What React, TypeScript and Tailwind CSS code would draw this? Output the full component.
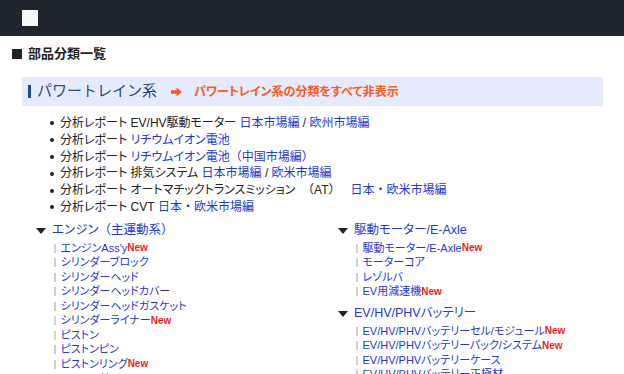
import React from 'react';

const font = { fontFamily: '"Liberation Sans", "Noto Sans CJK JP", sans-serif' };

type Item = { label: string; isNew?: boolean };

const engine: Item[] = [
  { label: "エンジンAss'y", isNew: true },
  { label: 'シリンダーブロック' },
  { label: 'シリンダーヘッド' },
  { label: 'シリンダーヘッドカバー' },
  { label: 'シリンダーヘッドガスケット' },
  { label: 'シリンダーライナー', isNew: true },
  { label: 'ピストン' },
  { label: 'ピストンピン' },
  { label: 'ピストンリング', isNew: true },
  { label: 'コンロッド' },
];

const motor: Item[] = [
  { label: '駆動モーター/E-Axle', isNew: true },
  { label: 'モーターコア' },
  { label: 'レゾルバ' },
  { label: 'EV用減速機', isNew: true },
];

const battery: Item[] = [
  { label: 'EV/HV/PHVバッテリーセル/モジュール', isNew: true },
  { label: 'EV/HV/PHVバッテリーパック/システム', isNew: true },
  { label: 'EV/HV/PHVバッテリーケース' },
  { label: 'EV/HV/PHVバッテリー正極材' },
];

// full-width punctuation keeps its normal width (palt off)
const N: React.FC<{ children: React.ReactNode }> = ({ children }) => (
  <span className="[font-feature-settings:normal]">{children}</span>
);

const Link: React.FC<{ children: React.ReactNode }> = ({ children }) => (
  <a href="#" className="text-[#2437d6] no-underline">{children}</a>
);

const Group: React.FC<{ title: React.ReactNode; items: Item[] }> = ({ title, items }) => (
  <div>
    <div className="flex items-center h-[20px]">
      <svg width="10" height="6" viewBox="0 0 10 6" className="mr-[6px]">
        <path d="M0 0h10L5 6z" fill="#222" />
      </svg>
      <span className="text-[12.5px] text-[#2437d6]">{title}</span>
    </div>
    <ul className="pl-[18px]">
      {items.map((it) => (
        <li key={it.label} className="flex items-center h-[14.5px] text-[11px] leading-none">
          <span className="w-[1.5px] h-[9px] bg-[#d0d0d0] mr-[5px]"></span>
          <Link>{it.label}</Link>
          {it.isNew && <span className="text-[10px] font-bold text-[#f01c1c]">New</span>}
        </li>
      ))}
    </ul>
  </div>
);

const Dot = () => <span className="w-[4px] h-[4px] rounded-full bg-[#222] mr-[6px]"></span>;

const App: React.FC = () => {
  return (
    <div className="w-[624px] h-[374px] overflow-hidden bg-white text-[#222] [font-feature-settings:'palt']" style={font}>
      {/* Header bar */}
      <div className="h-9 bg-[#1f252e] flex items-center pl-[22px]">
        <div className="w-4 h-4 bg-[#f6f6f7]"></div>
      </div>

      <div className="pl-3 pr-[21px]">
        <div className="flex items-center h-[18px] mt-[9px]">
          <span className="w-[10px] h-[10px] bg-[#222] mr-[6px]"></span>
          <h1 className="text-[13px] font-bold [font-feature-settings:normal]">部品分類一覧</h1>
        </div>

        <div className="ml-[10px] mt-[14px]">
          {/* Section band */}
          <div className="h-[29px] bg-[#e5eafc] flex items-center pl-[6px]">
            <span className="w-[3px] h-[13px] bg-[#1f4a92] mr-[6px]"></span>
            <h2 className="text-[15px] text-[#2c4a86] [font-feature-settings:normal]">パワートレイン系</h2>
            <svg width="11" height="10" viewBox="0 0 11 10" className="ml-[14px] mr-[12px]">
              <path d="M0 3.3h5.5V0.5L11 5 5.5 9.5V6.7H0z" fill="#fb5a1c" />
            </svg>
            <a href="#" className="text-[12px] font-bold text-[#fb5a1c]">パワートレイン系の分類をすべて非表示</a>
          </div>

          <ul className="mt-[9px] pl-[28px] text-[12px] leading-[16.8px]">
            <li className="flex items-center"><Dot />分析レポート EV/HV駆動モーター&nbsp;<Link>日本市場編</Link>&nbsp;/&nbsp;<Link>欧州市場編</Link></li>
            <li className="flex items-center"><Dot />分析レポート&nbsp;<Link>リチウムイオン電池</Link></li>
            <li className="flex items-center"><Dot />分析レポート&nbsp;<Link>リチウムイオン電池<N>（</N>中国市場編<N>）</N></Link></li>
            <li className="flex items-center"><Dot />分析レポート 排気システム&nbsp;<Link>日本市場編</Link>&nbsp;/&nbsp;<Link>欧米市場編</Link></li>
            <li className="flex items-center"><Dot />分析レポート オートマチックトランスミッション&nbsp;&nbsp;<N>（</N>AT<N>）</N>&nbsp;&nbsp;&nbsp;<Link>日本<N>・</N>欧米市場編</Link></li>
            <li className="flex items-center"><Dot />分析レポート CVT&nbsp;<Link>日本<N>・</N>欧米市場編</Link></li>
          </ul>

          <div className="grid grid-cols-[302px_1fr] mt-[5px] pl-[14px]">
            <div>
              <Group title={<>エンジン<N>（</N>主運動系<N>）</N></>} items={engine} />
            </div>
            <div>
              <Group title="駆動モーター/E-Axle" items={motor} />
              <div className="mt-[5px]">
                <Group title="EV/HV/PHVバッテリー" items={battery} />
              </div>
            </div>
          </div>
        </div>
      </div>
    </div>
  );
};

export default App;
